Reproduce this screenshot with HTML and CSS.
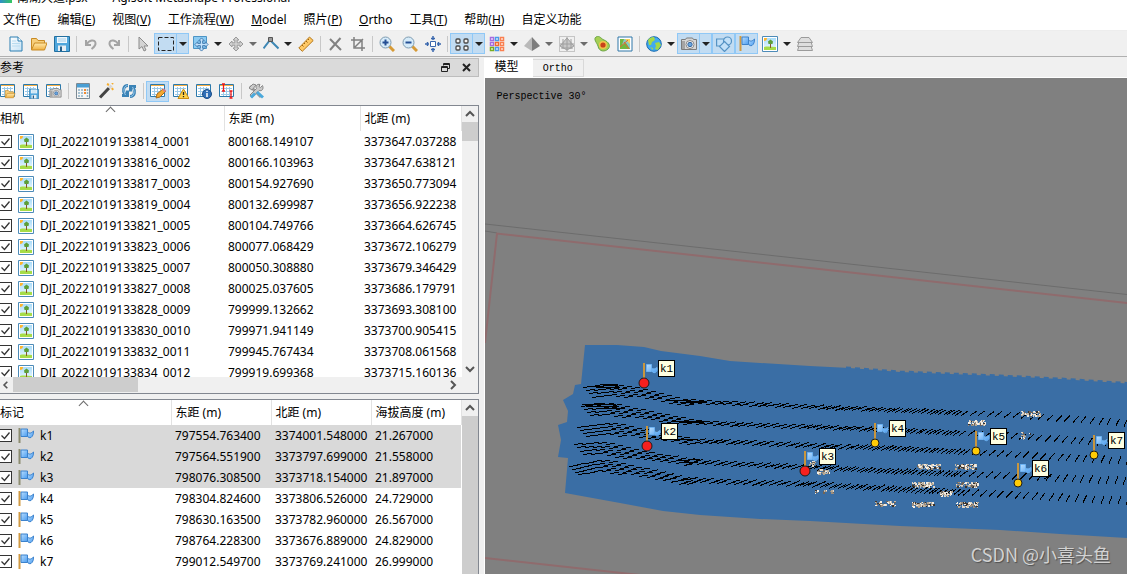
FILE: index.html
```html
<!DOCTYPE html>
<html lang="zh-CN">
<head>
<meta charset="utf-8">
<title>Agisoft Metashape Professional</title>
<link rel="stylesheet" href="styles.css">
</head>
<body>
<svg class="defs" aria-hidden="true">
  <defs>
    <linearGradient id="blueFlag" x1="0" y1="0" x2="1" y2="1"><stop offset="0" stop-color="#b9defF"/><stop offset="1" stop-color="#4a9cf0"/></linearGradient>
    <linearGradient id="sky" x1="0" y1="0" x2="0" y2="1"><stop offset="0" stop-color="#a9dcfa"/><stop offset="1" stop-color="#eef9ff"/></linearGradient>
    <linearGradient id="gold" x1="0" y1="0" x2="0" y2="1"><stop offset="0" stop-color="#ffe9ac"/><stop offset="1" stop-color="#f0b040"/></linearGradient>
    <linearGradient id="paper" x1="0" y1="0" x2="1" y2="1"><stop offset="0" stop-color="#fff"/><stop offset="1" stop-color="#c5e2f5"/></linearGradient>
    <symbol id="new" viewBox="0 0 16 16"><path d="M2 1h8l4 4v10H2z" fill="url(#paper)" stroke="#2d7fb2"/><path d="M10 1v4h4" fill="#fff" stroke="#2d7fb2"/><path d="M4 5h4M4 7.500h8M4 10h8" stroke="#b9dcf0"/></symbol>
    <symbol id="open" viewBox="0 0 16 16"><path d="M.5 13.500V2.500h5l1.500 2h6.500v3" fill="#f7cf7c" stroke="#c88a24"/><path d="M.5 14l3-7H16l-2.500 7z" fill="url(#gold)" stroke="#c88a24"/></symbol>
    <symbol id="save" viewBox="0 0 16 16"><path d="M.5 .5h15v15h-15z" fill="#4fa6dc" stroke="#226f9f"/><path d="M3 1h10v6H3z" fill="#eef7fd"/><path d="M4 3h8M4 5h8" stroke="#a5cde6"/><path d="M4 9.500h8V15H4z" fill="#e7eef3"/><path d="M6 10.500h2V15H6z" fill="#245f8c"/></symbol>
    <symbol id="undo" viewBox="0 0 16 16"><path d="M3 4v5h5M3.500 8.500C6 4 12 3 12.500 7c.3 3-2 4.500-4 6" fill="none" stroke="#a4a4a4" stroke-width="2"/></symbol>
    <symbol id="redo" viewBox="0 0 16 16"><path d="M13 4v5H8M12.500 8.500C10 4 4 3 3.500 7c-.3 3 2 4.500 4 6" fill="none" stroke="#a4a4a4" stroke-width="2"/></symbol>
    <symbol id="cursor" viewBox="0 0 16 16"><path d="M4 1v12l3-2.500L9 15l2-1-2-4h4z" fill="#d4d4d4" stroke="#8b8b8b"/></symbol>
    <symbol id="marquee" viewBox="0 0 16 16"><path d="M.5 1.500h15v13H.5z" fill="none" stroke="#222" stroke-dasharray="4 2"/></symbol>
    <symbol id="arrows4" viewBox="0 0 16 16"><path d="M8 1l3 3H9.200v2.800H12V5l3 3-3 3V9.200H9.200V12H11l-3 3-3-3h1.800V9.200H4V11L1 8l3-3v1.800h2.800V4H5z"/></symbol>
    <symbol id="nav" viewBox="0 0 16 16"><path d="M.5 .5h13v12H.5z" fill="#8ccbf2" stroke="#4c94c5"/><use href="#arrows4" x="1" y="1" width="15" height="15" fill="#c4e2fb" stroke="#3f78ae"/></symbol>
    <symbol id="move" viewBox="0 0 16 16"><use href="#arrows4" width="16" height="16" fill="#d0d0d0" stroke="#9a9a9a"/></symbol>
    <symbol id="poly" viewBox="0 0 16 16"><path d="M.5 12.500L7 4l8.500 8.500" fill="none" stroke="#3e87b4" stroke-width="2"/><path d="M5.500 1.500h4v4h-4z" fill="#999" stroke="#555"/></symbol>
    <symbol id="ruler" viewBox="0 0 16 16"><path d="M.8 12L11.500 1l3.700 3.500L4.300 15.300z" fill="#ffc966" stroke="#b57719"/><path d="M4 9l1.500 1.500M6 7l1 1M8 5l1.500 1.500M10 3l1 1" stroke="#9b6410"/></symbol>
    <symbol id="delete" viewBox="0 0 16 16"><path d="M3 3l11 11M13.500 2L3 14" stroke="#828282" stroke-width="2"/></symbol>
    <symbol id="crop" viewBox="0 0 16 16"><path d="M4 1v11h11M1 4h11v11M5 11l8-8" fill="none" stroke="#808080" stroke-width="1.500"/></symbol>
    <symbol id="lens" viewBox="0 0 16 16"><path d="M10 10l5 5" stroke="#d69a36" stroke-width="3"/><circle cx="6.500" cy="6.500" r="5.500" fill="#d6ebf9" stroke="#7e9bb0"/></symbol>
    <symbol id="zoomin" viewBox="0 0 16 16"><use href="#lens"/><path d="M6.500 3.500v6M3.500 6.500h6" stroke="#244f94" stroke-width="2"/></symbol>
    <symbol id="zoomout" viewBox="0 0 16 16"><use href="#lens"/><path d="M3.500 6.500h6" stroke="#244f94" stroke-width="2"/></symbol>
    <symbol id="fit" viewBox="0 0 16 16"><path d="M5.500 5.500h5v5h-5z" fill="#fff" stroke="#3a67ad"/><path d="M8 0v4M6 2.500h4M8 16v-4M6 13.500h4M0 8h4M2.500 6v4M16 8h-4M13.500 6v4" stroke="#3a67ad" stroke-width="1.500"/></symbol>
    <symbol id="points" viewBox="0 0 16 16"><g fill="#f4f4f4" stroke="#4a4a4a" stroke-width="1.300"><rect x="2" y="3" width="4" height="4" rx="1"/><rect x="10" y="3" width="4" height="4" rx="1"/><rect x="2" y="10" width="4" height="4" rx="1"/><rect x="10" y="10" width="4" height="4" rx="1"/></g></symbol>
    <symbol id="colors" viewBox="0 0 16 16"><g fill="#fff" stroke-width="1.500"><path d="M1.500 1.500h3v3h-3z" stroke="#a66be0"/><path d="M6.500 1.500h3v3h-3z" stroke="#4a9be8"/><path d="M11.500 1.500h3v3h-3z" stroke="#fa8050"/><path d="M1.500 6.500h3v3h-3z" stroke="#a66be0"/><path d="M6.500 6.500h3v3h-3z" stroke="#f06a30"/><path d="M11.500 6.500h3v3h-3z" stroke="#fa8050"/><path d="M1.500 11.500h3v3h-3z" stroke="#78ad20"/><path d="M6.500 11.500h3v3h-3z" stroke="#4a9be8"/><path d="M11.500 11.500h3v3h-3z" stroke="#fa8050"/></g></symbol>
    <symbol id="pyramid" viewBox="0 0 16 16"><path d="M8 1L0 10l8 5z" fill="#b9b9b9"/><path d="M8 1l8 9-8 5z" fill="#7d7d7d"/></symbol>
    <symbol id="tiled" viewBox="0 0 16 16"><path d="M.5 .5h15v15H.5z" fill="none" stroke="#9a9a9a" stroke-dasharray="1 1"/><path d="M8 2l7 8-7 4-7-4z" fill="#c8c8c8" stroke="#a0a0a0"/><path d="M1 8h14M8 1v14M4 3v10M12 3v10M2 12h12" stroke="#a0a0a0"/></symbol>
    <symbol id="avocado" viewBox="0 0 16 16"><path d="M2 1c4-2 5 2 8 3 5 2 7 6 4 9s-9 3-10-3C3 7-1 3 2 1z" fill="#a6cf54" stroke="#6ba544"/><circle cx="9" cy="9" r="4" fill="#f2c34b"/><circle cx="9" cy="9" r="2.600" fill="#c8421b"/></symbol>
    <symbol id="map" viewBox="0 0 16 16"><path d="M1 1h14v14H1z" fill="#fff" stroke="#2f77a8"/><path d="M3 3h10v10H3z" fill="#8cc9c4"/><path d="M3 3h4l-2 6 4-2 4 6H3z" fill="#6fb83f"/><path d="M8 3h5v5z" fill="#f7d35c"/><path d="M3 11l8-7M7 6l5 7" stroke="#e0682f"/></symbol>
    <symbol id="globe" viewBox="0 0 16 16"><circle cx="8" cy="8" r="7.300" fill="#42aaf0" stroke="#1769ae"/><path d="M2 4c2-3 5-3 6-3l1 3-3 2-1 3-2 0zM9 7l4-1 2 3-3 5-3-1 1-3zM4 11l3 1v2z" fill="#a4d84a"/></symbol>
    <symbol id="camera" viewBox="0 0 16 16"><path d="M.5 3.500h4l1-1.500h6l1 1.500h3v10H.5z" fill="#d6d6d6" stroke="#7c7c7c"/><path d="M1 5h3v8H1z" fill="#a4a4a4"/><circle cx="9" cy="8.500" r="4" fill="#f6f6f6" stroke="#888"/><circle cx="9" cy="8.500" r="2.200" fill="#67a5e0" stroke="#39669b"/></symbol>
    <symbol id="shapes" viewBox="0 0 16 16"><g fill="#c2e0f8" stroke="#5693c4" stroke-width="1.200"><path d="M.6 3h8v7h-8z"/><circle cx="11.500" cy="5" r="4"/><path d="M8.500 5.500l5 5-5 5-5-5z"/></g></symbol>
    <symbol id="flag" viewBox="0 0 16 16"><path d="M1.500 0v15" stroke="var(--pole,#d19a43)" stroke-width="2"/><path d="M3 1h6.500v7.500H3z" fill="url(#blueFlag)" stroke="#3c82cc"/><path d="M9.500 4c2 2 4 1 6-1 0 3-.5 5-2.500 6.500-1.500.5-3 0-3.500-1.500z" fill="url(#blueFlag)" stroke="#3c82cc"/></symbol>
    <symbol id="photo" viewBox="0 0 16 16"><path d="M.5 .5h15v15H.5z" fill="#fff" stroke="#4d8bb8"/><path d="M2 2h12v12H2z" fill="url(#sky)"/><path d="M2 2h3c0 2-1 3-3 3z" fill="#ffb52a"/><path d="M2 11c4-1 8 0 12 0v3H2z" fill="#a6dc48"/><path d="M8.500 8v4" stroke="#87572b"/><path d="M8.500 3.500l2.500 2-.5 2.500h-4L6 5.500z" fill="#5c9f38"/></symbol>
    <symbol id="stack" viewBox="0 0 16 16"><g fill="#dedede" stroke="#9b9b9b"><path d="M2 10h12l1.500 4.500H.5z"/><path d="M2 6h12l1.500 4.500H.5z"/><path d="M4 1.500h8L15.500 6.500H.5z"/></g></symbol>
    <symbol id="sheet" viewBox="0 0 16 16"><path d="M.5 1.500h14v12H.5z" fill="#fff" stroke="#2c79ab"/><path d="M1 2.500h13" stroke="#f3ae45"/><path d="M2 5.500h11M2 8.500h11M2 11.500h11M4.500 4v9M7.500 4v9M10.500 4v9" stroke="#9bc9e8"/></symbol>
    <symbol id="sheetOpen" viewBox="0 0 16 16"><use href="#sheet"/><use href="#open" x="4" y="6" width="12" height="10"/></symbol>
    <symbol id="sheetSave" viewBox="0 0 16 16"><use href="#sheet"/><use href="#save" x="6" y="6" width="10" height="10"/></symbol>
    <symbol id="sheetCam" viewBox="0 0 16 16"><use href="#sheet"/><use href="#camera" x="3" y="4" width="13" height="12"/></symbol>
    <symbol id="calc" viewBox="0 0 16 16"><path d="M1.500 .5h13v15h-13z" fill="#f6f6f6" stroke="#7c8a94"/><path d="M2 1h12v3.500H2z" fill="#4a9fd4"/><path d="M4 6v9M7 6v9M12.500 6v9" stroke="#8fb2c6" stroke-width="1.500" stroke-dasharray="2 1"/><path d="M10 6v6" stroke="#f08b34" stroke-width="2" stroke-dasharray="2 1"/></symbol>
    <symbol id="wand" viewBox="0 0 16 16"><path d="M2 14.500L11 5" stroke="#444" stroke-width="3"/><path d="M11 5l2.500-2.500" stroke="#d6d6d6" stroke-width="3"/><path d="M9 1l2 1M15 7l-1-2M14 1l1-1" stroke="#f6ad2d" stroke-width="2"/></symbol>
    <symbol id="refresh" viewBox="0 0 16 16"><path d="M7 2.500C2 2.500 1.500 8 4 12M1 12.500h5.500v-5M9 13.500c5 0 5.500-5.500 3-9.500M15 3.500H9.500v5" fill="none" stroke="#3b83b6" stroke-width="3"/><path d="M6.500 2.500C2.500 3 2 8 4.500 12M9.500 13.500C13.500 13 14 8 11.500 4" fill="none" stroke="#9fcdee"/></symbol>
    <symbol id="sheetEdit" viewBox="0 0 16 16"><use href="#sheet"/><path d="M6 15l1-4 6-5 2.500 2.500L10 14z" fill="#f5a82e" stroke="#a86c1b"/><path d="M13 6l2.500 2.500" stroke="#d77b86" stroke-width="2"/></symbol>
    <symbol id="sheetWarn" viewBox="0 0 16 16"><use href="#sheet"/><path d="M10.500 6l5.500 9.500H5z" fill="#ffd24a" stroke="#cb8d12"/><path d="M10.500 9v3M10.500 13v1.200" stroke="#222" stroke-width="1.300"/></symbol>
    <symbol id="sheetInfo" viewBox="0 0 16 16"><use href="#sheet"/><circle cx="11" cy="11" r="4.500" fill="#2f6fb7" stroke="#1a4c86"/><path d="M11 10v4M11 7.800v1.200" stroke="#fff" stroke-width="1.500"/></symbol>
    <symbol id="sheetErr" viewBox="0 0 16 16"><use href="#sheet"/><path d="M3 1h3M4.500 1v7M3 8h3M10.500 8h3M12 8v7M10.500 15h3" stroke="#f01818" stroke-width="1.300"/></symbol>
    <symbol id="tools" viewBox="0 0 16 16"><path d="M2 3l11 11" stroke="#999" stroke-width="3"/><path d="M1 5l4-4 3 1-4 5z" fill="#ccc" stroke="#888"/><path d="M14.500 2.500l-2 2-1.500-1 1-2c-3-1-5 2-3.500 4L2 12l2 2.500 7-7c3 1 5-1.500 3.500-5z" fill="#c9c9c9" stroke="#888"/><path d="M9 9l6 5.500M7 10.500L3 14.500" stroke="#4ba9dc" stroke-width="3"/></symbol>
  </defs>
</svg>

<header class="titlebar">
  <span class="app-icon"></span>
  <span>南湖大道.psx* — Agisoft Metashape Professional</span>
</header>

<nav class="menubar" aria-label="主菜单">
  <button>文件(<u>F</u>)</button><button>编辑(<u>E</u>)</button><button>视图(<u>V</u>)</button><button>工作流程(<u>W</u>)</button><button><u>M</u>odel</button><button>照片(<u>P</u>)</button><button><u>O</u>rtho</button><button>工具(<u>T</u>)</button><button>帮助(<u>H</u>)</button><button>自定义功能</button>
</nav>

<div class="toolbar main-tools" role="toolbar" aria-label="工具栏">
  <button class="tool" aria-label="新建"><svg><use href="#new"/></svg></button>
  <button class="tool" aria-label="打开"><svg><use href="#open"/></svg></button>
  <button class="tool" aria-label="保存"><svg><use href="#save"/></svg></button>
  <span class="sep"></span>
  <button class="tool" aria-label="撤销"><svg><use href="#undo"/></svg></button>
  <button class="tool" aria-label="重做"><svg><use href="#redo"/></svg></button>
  <span class="sep"></span>
  <button class="tool" aria-label="指针"><svg><use href="#cursor"/></svg></button>
  <span class="split on"><button class="tool" aria-label="矩形选择"><svg><use href="#marquee"/></svg></button><button class="drop" aria-label="选择方式"></button></span>
  <span class="split"><button class="tool" aria-label="导航"><svg><use href="#nav"/></svg></button><button class="drop" aria-label="导航方式"></button></span>
  <span class="split off"><button class="tool" aria-label="移动"><svg><use href="#move"/></svg></button><button class="drop" aria-label="移动方式"></button></span>
  <span class="split"><button class="tool" aria-label="折线"><svg><use href="#poly"/></svg></button><button class="drop" aria-label="绘制方式"></button></span>
  <button class="tool" aria-label="标尺"><svg><use href="#ruler"/></svg></button>
  <span class="sep"></span>
  <button class="tool" aria-label="删除"><svg><use href="#delete"/></svg></button>
  <button class="tool" aria-label="裁剪"><svg><use href="#crop"/></svg></button>
  <span class="sep"></span>
  <button class="tool" aria-label="放大"><svg><use href="#zoomin"/></svg></button>
  <button class="tool" aria-label="缩小"><svg><use href="#zoomout"/></svg></button>
  <button class="tool" aria-label="重置视图"><svg><use href="#fit"/></svg></button>
  <span class="sep"></span>
  <span class="split on"><button class="tool" aria-label="点云"><svg><use href="#points"/></svg></button><button class="drop" aria-label="点云方式"></button></span>
  <span class="split"><button class="tool" aria-label="密集点云"><svg><use href="#colors"/></svg></button><button class="drop" aria-label="密集点云方式"></button></span>
  <span class="split off"><button class="tool" aria-label="模型"><svg><use href="#pyramid"/></svg></button><button class="drop" aria-label="模型方式"></button></span>
  <span class="split off"><button class="tool" aria-label="瓦片模型"><svg><use href="#tiled"/></svg></button><button class="drop" aria-label="瓦片方式"></button></span>
  <button class="tool" aria-label="高程"><svg><use href="#avocado"/></svg></button>
  <button class="tool" aria-label="正射影像"><svg><use href="#map"/></svg></button>
  <span class="sep"></span>
  <span class="split"><button class="tool" aria-label="底图"><svg><use href="#globe"/></svg></button><button class="drop" aria-label="底图方式"></button></span>
  <span class="split on"><button class="tool" aria-label="显示相机"><svg><use href="#camera"/></svg></button><button class="drop" aria-label="相机方式"></button></span>
  <button class="tool on" aria-label="显示形状"><svg><use href="#shapes"/></svg></button>
  <button class="tool on" aria-label="显示标记"><svg><use href="#flag"/></svg></button>
  <span class="split"><button class="tool" aria-label="显示影像"><svg><use href="#photo"/></svg></button><button class="drop" aria-label="影像方式"></button></span>
  <button class="tool" aria-label="图层"><svg><use href="#stack"/></svg></button>
</div>

<main class="workspace">
  <section class="dock" aria-label="参考">
    <div class="dock-title">
      <h2>参考</h2>
      <button aria-label="浮动"><svg class="glyph" viewBox="0 0 9 9"><path d="M2.500 2.500v-2h6v5h-2M.5 3.500h6v5h-6zM.5 4.500h6M2.500 1.500h6" fill="none" stroke="#222"/></svg></button>
      <button aria-label="关闭"><svg class="glyph" viewBox="0 0 9 9"><path d="M1 1l7 7M8 1L1 8" stroke="#222" stroke-width="2"/></svg></button>
    </div>
    <div class="toolbar ref-tools" role="toolbar" aria-label="参考工具">
      <button class="tool" aria-label="导入"><svg><use href="#sheetOpen"/></svg></button>
      <button class="tool" aria-label="导出"><svg><use href="#sheetSave"/></svg></button>
      <button class="tool" aria-label="导入相机"><svg><use href="#sheetCam"/></svg></button>
      <span class="sep"></span>
      <button class="tool" aria-label="转换"><svg><use href="#calc"/></svg></button>
      <button class="tool" aria-label="优化"><svg><use href="#wand"/></svg></button>
      <button class="tool" aria-label="更新"><svg><use href="#refresh"/></svg></button>
      <span class="sep"></span>
      <button class="tool on" aria-label="查看源"><svg><use href="#sheetEdit"/></svg></button>
      <button class="tool" aria-label="查看错误"><svg><use href="#sheetWarn"/></svg></button>
      <button class="tool" aria-label="查看估计"><svg><use href="#sheetInfo"/></svg></button>
      <button class="tool" aria-label="查看方差"><svg><use href="#sheetErr"/></svg></button>
      <span class="sep"></span>
      <button class="tool" aria-label="设置"><svg><use href="#tools"/></svg></button>
    </div>
    <div class="lists">
      <div class="list">
        <div class="rows">
          <table class="cameras">
            <colgroup><col class="c-cam"><col class="c-east"><col></colgroup>
            <thead><tr><th class="sorted">相机</th><th>东距 (m)</th><th>北距 (m)</th></tr></thead>
            <tbody>
              <tr><td><label><input type="checkbox" checked><svg><use href="#photo"/></svg>DJI_20221019133814_0001</label></td><td>800168.149107</td><td>3373647.037288</td></tr>
              <tr><td><label><input type="checkbox" checked><svg><use href="#photo"/></svg>DJI_20221019133816_0002</label></td><td>800166.103963</td><td>3373647.638121</td></tr>
              <tr><td><label><input type="checkbox" checked><svg><use href="#photo"/></svg>DJI_20221019133817_0003</label></td><td>800154.927690</td><td>3373650.773094</td></tr>
              <tr><td><label><input type="checkbox" checked><svg><use href="#photo"/></svg>DJI_20221019133819_0004</label></td><td>800132.699987</td><td>3373656.922238</td></tr>
              <tr><td><label><input type="checkbox" checked><svg><use href="#photo"/></svg>DJI_20221019133821_0005</label></td><td>800104.749766</td><td>3373664.626745</td></tr>
              <tr><td><label><input type="checkbox" checked><svg><use href="#photo"/></svg>DJI_20221019133823_0006</label></td><td>800077.068429</td><td>3373672.106279</td></tr>
              <tr><td><label><input type="checkbox" checked><svg><use href="#photo"/></svg>DJI_20221019133825_0007</label></td><td>800050.308880</td><td>3373679.346429</td></tr>
              <tr><td><label><input type="checkbox" checked><svg><use href="#photo"/></svg>DJI_20221019133827_0008</label></td><td>800025.037605</td><td>3373686.179791</td></tr>
              <tr><td><label><input type="checkbox" checked><svg><use href="#photo"/></svg>DJI_20221019133828_0009</label></td><td>799999.132662</td><td>3373693.308100</td></tr>
              <tr><td><label><input type="checkbox" checked><svg><use href="#photo"/></svg>DJI_20221019133830_0010</label></td><td>799971.941149</td><td>3373700.905415</td></tr>
              <tr><td><label><input type="checkbox" checked><svg><use href="#photo"/></svg>DJI_20221019133832_0011</label></td><td>799945.767434</td><td>3373708.061568</td></tr>
              <tr><td><label><input type="checkbox" checked><svg><use href="#photo"/></svg>DJI_20221019133834_0012</label></td><td>799919.699368</td><td>3373715.160136</td></tr>
            </tbody>
          </table>
        </div>
        <div class="vscroll">
          <svg viewBox="0 0 16 16"><path d="M4 10l4-4 4 4"/></svg>
          <span class="thumb short"></span>
          <svg class="end" viewBox="0 0 16 16"><path d="M4 6l4 4 4-4"/></svg>
        </div>
        <div class="hscroll">
          <svg viewBox="0 0 16 16"><path d="M9 4L5 8l4 4"/></svg>
          <span class="thumb"></span>
          <svg class="end" viewBox="0 0 16 16"><path d="M5 4l4 4-4 4"/></svg>
        </div>
      </div>
      <div class="list">
        <div class="rows">
          <table class="markers">
            <colgroup><col class="c-mark"><col class="c-num"><col class="c-num"><col></colgroup>
            <thead><tr><th class="sorted">标记</th><th>东距 (m)</th><th>北距 (m)</th><th>海拔高度 (m)</th></tr></thead>
            <tbody>
              <tr class="selected"><td><label><input type="checkbox" checked><svg><use href="#flag"/></svg>k1</label></td><td>797554.763400</td><td>3374001.548000</td><td>21.267000</td></tr>
              <tr class="selected"><td><label><input type="checkbox" checked><svg><use href="#flag"/></svg>k2</label></td><td>797564.551900</td><td>3373797.699000</td><td>21.558000</td></tr>
              <tr class="selected"><td><label><input type="checkbox" checked><svg><use href="#flag"/></svg>k3</label></td><td>798076.308500</td><td>3373718.154000</td><td>21.897000</td></tr>
              <tr><td><label><input type="checkbox" checked><svg><use href="#flag"/></svg>k4</label></td><td>798304.824600</td><td>3373806.526000</td><td>24.729000</td></tr>
              <tr><td><label><input type="checkbox" checked><svg><use href="#flag"/></svg>k5</label></td><td>798630.163500</td><td>3373782.960000</td><td>26.567000</td></tr>
              <tr><td><label><input type="checkbox" checked><svg><use href="#flag"/></svg>k6</label></td><td>798764.228300</td><td>3373676.889000</td><td>24.829000</td></tr>
              <tr><td><label><input type="checkbox" checked><svg><use href="#flag"/></svg>k7</label></td><td>799012.549700</td><td>3373769.241000</td><td>26.999000</td></tr>
            </tbody>
          </table>
        </div>
        <div class="vscroll">
          <svg viewBox="0 0 16 16"><path d="M4 10l4-4 4 4"/></svg>
          <span class="thumb long"></span>
        </div>
      </div>
    </div>
  </section>

  <section class="view" aria-label="模型">
    <div class="tabs" role="tablist">
      <button role="tab" class="tab active" aria-selected="true">模型</button>
      <button role="tab" class="tab" aria-selected="false">Ortho</button>
    </div>
    <div class="canvas">
      <svg class="scene" aria-hidden="true">
        <g transform="translate(-485 -78)">
          <path class="horizon" d="M485 224L1127 294.500L1700 357M485 231l12 2"/>
          <path class="bounds" d="M485 343L497 233.500L810 268L1127 303L1700 366M485 558L640 575"/>
          <path class="survey" d="M585 345H617L644 347 661 351 700 356 730 361 760 363 810 366 850 368 900 372 950 374 1000 376 1060 379 1127 383.500 1700 420V572L1127 538 1060 534 1000 530 950 528 900 526 810 521 760 519 700 515 663 511 620 503 565 493 568 458 558 457 561 440 558 425 567 422 568 411 563 400 573 394 575 385 581 384z"/>
          <path class="teeth" d="M846 367.500L900 371.500 950 373.500 1000 375.500 1060 378.500 1127 383"/>
          <g id="shots" class="shots"></g>
          <g id="specks"></g>
          <g id="pins"></g>
        </g>
      </svg>
      <span class="projection">Perspective 30°</span>
      <span class="watermark">CSDN @小喜头鱼</span>
    </div>
  </section>
</main>
<script src="scene.js"></script>
</body>
</html>
```
FILE: styles.css
```css
* { box-sizing: border-box; }

body {
  margin: 0;
  height: 100vh;
  display: flex;
  flex-direction: column;
  overflow: hidden;
  background: #f0f0f0;
  color: #000;
  font: 12px/16px "Noto Sans", "Noto Sans CJK SC", sans-serif;
}

button {
  border: 0;
  padding: 0;
  background: none;
  color: inherit;
  font: inherit;
}

.defs { position: absolute; width: 0; height: 0; }

/* Title and menu */
.titlebar {
  display: flex;
  align-items: flex-end;
  gap: 5px;
  height: 6px;
  overflow: hidden;
  background: #fff;
  white-space: nowrap;
}

.app-icon {
  align-self: flex-start;
  width: 12px;
  height: 3px;
  background: linear-gradient(90deg, #2f8fc8, #35c860);
}

.menubar {
  display: flex;
  flex: none;
  gap: 17px;
  height: 25px;
  padding: 3px 3px 0;
  background: #fff;
  border-bottom: 1px solid #ededed;
}

/* Toolbars */
.toolbar { display: flex; flex: none; align-items: center; }

.main-tools {
  padding: 2px 4px;
  border-bottom: 1px solid #b0b0b0;
}

.tool {
  display: grid;
  place-items: center;
  flex: none;
  width: 23px;
  height: 21px;
}

.tool svg { width: 16px; height: 16px; }

.sep {
  flex: none;
  width: 6px;
  height: 16px;
  background: linear-gradient(#c8c8c8, #c8c8c8) center / 1px 100% no-repeat;
}

.split { display: flex; flex: none; }

.drop {
  display: grid;
  place-items: center;
  width: 12px;
  height: 21px;
}

.drop::before {
  content: "";
  border: 4px solid transparent;
  border-top-color: #222;
  border-bottom: 0;
}

.off .drop::before { border-top-color: #6c6c6c; }

.tool.on,
.on .tool,
.on .drop {
  background: #c2dcf2;
  border: 1px solid #90c8f6;
}

.on .drop { border-left: 0; }

/* Workspace */
.workspace {
  flex: 1;
  min-height: 0;
  display: grid;
  grid-template-columns: 43fr 57fr;
  padding-top: 1px;
}

.dock {
  display: flex;
  flex-direction: column;
  min-width: 0;
  min-height: 0;
  padding-right: 5px;
  border-right: 1px solid #fff;
}

.dock-title {
  display: flex;
  flex: none;
  align-items: center;
  gap: 12px;
  height: 19px;
  padding-right: 7px;
  background: #dadada;
  border: 1px solid #bdbdbd;
  border-left: 0;
}

.dock-title h2 {
  flex: 1;
  margin: 0;
  font: inherit;
}

.dock-title button { display: flex; }

.glyph { width: 9px; height: 9px; }

.ref-tools {
  height: 28px;
  margin-left: -4px;
}

.lists {
  flex: 1;
  min-height: 0;
  display: grid;
  grid-template-rows: 289fr 175fr;
  gap: 5px;
}

.list {
  display: grid;
  grid-template-columns: 1fr 16px;
  grid-template-rows: 1fr auto;
  min-height: 0;
  border: 1px solid #828790;
  border-left: 0;
  background: #fff;
}

.lists .list:last-child { border-bottom: 0; }

.rows {
  min-width: 0;
  min-height: 0;
  overflow: hidden;
}

table {
  width: 100%;
  border-collapse: collapse;
  table-layout: fixed;
}

.c-cam { width: 224px; }
.c-east { width: 136px; }
.c-mark { width: 171px; }
.c-num { width: 100px; }

th, td {
  padding: 0 0 0 4px;
  text-align: left;
  font-weight: normal;
  white-space: nowrap;
}

th {
  position: relative;
  height: 25px;
  border-right: 1px solid #e2e2e2;
}

th:first-child, td:first-child { padding-left: 0; }

.sorted::after {
  content: "";
  position: absolute;
  top: 2px;
  left: calc(50% - 5px);
  width: 6px;
  height: 6px;
  border: solid #6a6a6a;
  border-width: 1px 0 0 1px;
  transform: rotate(45deg);
}

td { height: 21px; }

.selected { background: #d9d9d9; --pole: #8d8d70; }

label {
  display: flex;
  align-items: center;
  height: 21px;
}

label svg {
  flex: none;
  width: 16px;
  height: 16px;
  margin: 0 6px;
}

input[type="checkbox"] {
  appearance: none;
  flex: none;
  width: 13px;
  height: 13px;
  margin: 0 0 0 -1px;
  border: 1px solid #333;
  background: #fff url("data:image/svg+xml,%3Csvg xmlns='http://www.w3.org/2000/svg' viewBox='0 0 11 11'%3E%3Cpath d='M1.500 5.500l3 3 5-6' fill='none' stroke='%23333' stroke-width='1.300'/%3E%3C/svg%3E") center / 11px 11px no-repeat;
}

.vscroll, .hscroll {
  display: flex;
  min-height: 0;
  background: #f0f0f0;
}

.vscroll { flex-direction: column; }
.hscroll { grid-column: 1 / -1; padding-right: 16px; }

.vscroll svg, .hscroll svg {
  flex: none;
  width: 16px;
  height: 16px;
  fill: none;
  stroke: #555;
  stroke-width: 2;
}

.hscroll svg:first-child { width: 13px; }
.end { margin-top: auto; }
.hscroll .end { margin: 0 0 0 auto; }

.thumb { background: #cdcdcd; }
.hscroll .thumb { width: 27%; margin-bottom: 1px; }
.thumb.short { height: 19px; }
.thumb.long { flex: 1; }

/* Model view */
.view {
  display: flex;
  flex-direction: column;
  min-width: 0;
  font-family: "Liberation Mono", "Noto Sans CJK SC", monospace;
}

.tabs {
  display: flex;
  flex: none;
  align-items: flex-end;
  height: 20px;
  border-bottom: 1px solid #fff;
}

.tab {
  height: 18px;
  padding: 1px 10px 0;
  border: 1px solid #d9d9d9;
  border-left: 0;
  font-size: 10px;
}

.tab.active {
  height: 20px;
  margin-bottom: -1px;
  padding: 0 14px 0 10px;
  background: #fff;
  border: 0;
  font-size: 12px;
}

.canvas {
  position: relative;
  flex: 1;
  min-height: 0;
  overflow: hidden;
  background: #808080;
}

.scene { display: block; width: 100%; height: 100%; }

.horizon { fill: none; stroke: #6c6c6c; }
.bounds { fill: none; stroke: #8f6b6d; stroke-width: 2; }
.survey { fill: #3a6ea5; }
.teeth { fill: none; stroke: #3a6ea5; stroke-width: 2; stroke-dasharray: 5 4; }
.shots { stroke: #000; stroke-width: 1; }
.pole { fill: #c8963e; }
.label-box { fill: #ffffe1; stroke: #000; }
.label { font-size: 11px; }
.dot { stroke: #1c1c1c; stroke-width: 1; }

.projection {
  position: absolute;
  top: 11px;
  left: 12px;
  font-size: 10px;
}

.watermark {
  position: absolute;
  right: 16px;
  bottom: 8px;
  color: #d2d2d2;
  font: 18px/24px "Noto Sans CJK SC", sans-serif;
  text-shadow: 1px 1px 1px #505050;
}
```
FILE: scene.js
```js
const NS = "http://www.w3.org/2000/svg";

function add(parent, name, attrs) {
  const node = document.createElementNS(NS, name);
  for (const key in attrs) node.setAttribute(key, attrs[key]);
  parent.appendChild(node);
  return node;
}

let seed = 7;
function random() {
  seed = (seed * 16807) % 2147483647;
  return seed / 2147483647;
}

// Linear interpolation through a list of [x, y] points.
function at(points, x) {
  for (let i = 1; i < points.length; i++) {
    if (x <= points[i][0]) {
      const [x0, y0] = points[i - 1];
      const [x1, y1] = points[i];
      return y0 + (y1 - y0) * (x - x0) / (x1 - x0);
    }
  }
  return points[points.length - 1][1];
}

// Camera stations: each flight line is a run of short view-direction strokes.
const lines = [
  [[583, 387], [612, 385], [640, 390], [680, 400], [720, 402], [810, 407], [1010, 417], [1127, 426]],
  [[581, 406], [606, 404], [640, 411], [690, 421], [740, 424], [810, 427], [1000, 437], [1127, 447]],
  [[577, 427], [605, 423], [640, 430], [690, 440], [740, 442], [810, 446], [900, 450], [1000, 456], [1127, 464]],
  [[574, 444], [600, 443], [640, 452], [690, 461], [740, 464], [810, 468], [900, 473], [1000, 478], [1127, 484]],
  [[569, 466], [598, 460], [640, 469], [680, 479], [740, 482], [810, 485], [900, 491], [1000, 497], [1127, 504]]
];
const rise = [[580, 1], [690, 1], [810, 2.5], [900, 4], [1000, 5], [1127, 7]];
const run = [[580, 9], [810, 9], [900, 8], [1000, 7], [1060, 6], [1127, 3]];

const shots = document.getElementById("shots");
let d = "";
lines.forEach((line, index) => {
  for (let track = 0; track < 4; track++) {
    const end = [1130, 960, 690, 625][track];
    for (let x = line[0][0] + track * 3; x < end; x += x < 700 ? 8 : 8.6) {
      const spread = x < 690 ? 3.4 - Math.max(0, x - 640) / 40 : 2.5 * (1000 - x) / 310;
      const y = Math.round(at(line, x) + track * spread) + 0.5;
      const w = at(run, x + index * 8);
      const h = at(rise, x + index * 22);
      d += `M${Math.round(x)} ${y}l${w.toFixed(1)} ${(-h).toFixed(1)}`;
    }
  }
});
// Denser turns at the start of the first lines.
d += "M590 386.500l28-1M596 388l24-1M600 384l18 1M582 405l34-1M586 407l34-1M594 403l22 2M598 408l26 0M670 400.500l34 1M680 402l26 0M672 421l38 1M684 423l20-1M672 439l24 1M676 461l24-2M680 463l18-1M672 482l24-4M1044 479l7-3";
add(shots, "path", { d, fill: "none", "shape-rendering": "crispEdges" });

// Tie points: [centre x, centre y, width, height].
const clusters = [
  [1031, 414, 20, 7], [977, 423, 18, 7], [1023, 436, 5, 8], [1030, 434, 2, 3],
  [929, 467, 24, 7], [966, 467, 22, 7], [923, 485, 23, 7], [967, 485, 23, 7],
  [946, 494, 13, 7], [885, 504, 21, 6], [923, 505, 23, 7], [967, 505, 23, 7],
  [823, 472, 13, 7], [816, 492, 4, 5], [825, 492, 5, 4], [832, 492, 5, 5], [812, 464, 7, 6]
];
const shades = ["#f6efe4", "#e0d6c8", "#c3b8a8", "#9b8e7f", "#6d645b", "#3a332d", "#f3ece2", "#b5a793"];
const specks = document.getElementById("specks");
for (const [cx, cy, w, h] of clusters) {
  for (let i = 0; i < w * h * 0.5; i++) {
    add(specks, "rect", {
      x: Math.round(cx - w / 2 + random() * (w - 1)),
      y: Math.round(cy - h / 2 + random() * (h - 2)),
      width: random() > 0.5 ? 2 : 1,
      height: random() > 0.5 ? 2 : 1,
      fill: shades[Math.floor(random() * shades.length)]
    });
  }
}

const pins = document.getElementById("pins");
const points = [
  ["k1", 644, 383, true], ["k2", 647, 446, true], ["k3", 805, 471, true],
  ["k4", 875, 443, false], ["k5", 976, 451, false], ["k6", 1018, 483, false],
  ["k7", 1094, 455, false]
];
for (const [name, x, y, picked] of points) {
  const pin = add(pins, "g", { transform: `translate(${x} ${y})` });
  add(pin, "rect", { class: "pole", x: -1, y: -20, width: 2, height: 16 });
  add(pin, "path", { d: "M2.500 -18.500h5v7h-5zM8.500 -14.500c2 1 3 0 4.500-1v3c-1 2-2.500 3-4.500 1.500z", fill: "url(#blueFlag)", stroke: "#6db2f2", "stroke-width": 1 });
  add(pin, "circle", { class: "dot", r: picked ? 5 : 4, fill: picked ? "#f6201f" : "#ffcb05" });
  add(pin, "rect", { class: "label-box", x: 14.5, y: -22.5, width: 16, height: 16 });
  add(pin, "text", { class: "label", x: 16, y: -11 }).textContent = name;
}
```
